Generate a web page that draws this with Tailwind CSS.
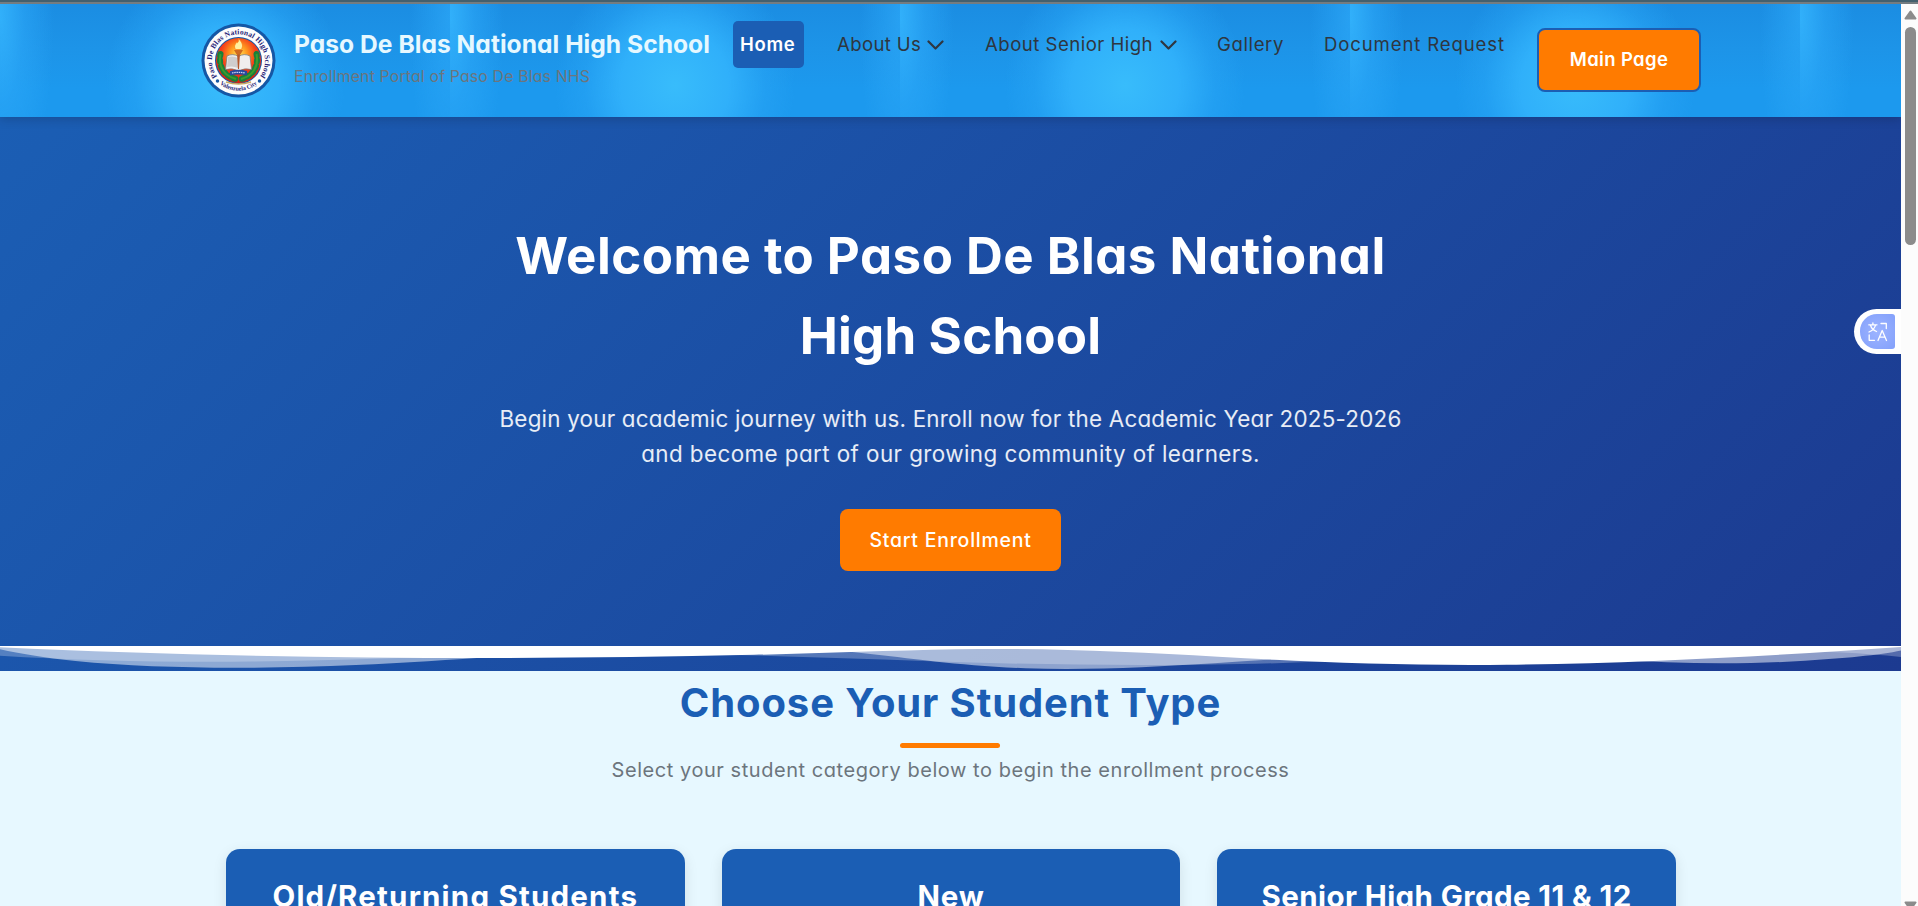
<!DOCTYPE html>
<html lang="en">
<head>
<meta charset="utf-8">
<title>Paso De Blas National High School</title>
<script src="https://cdn.jsdelivr.net/npm/@tailwindcss/browser@4"></script>
</head>
<body class="h-[906px] overflow-hidden bg-[#e7f8ff] font-['Inter','Open_Sans',sans-serif] [font-feature-settings:'cv11']">
<div class="flex h-[906px] flex-col overflow-hidden">
  <!-- browser edge -->
  <div class="h-1 shrink-0 border-b-2 border-[#747c80] bg-[#43606e]"></div>
  <div class="flex min-h-0 flex-1">
    <div class="relative flex w-[1901px] shrink-0 flex-col overflow-hidden">

      <header class="relative z-10 h-[113px] shrink-0 shadow-[0_2px_10px_rgba(0,0,0,0.18)] bg-[size:450px_113px] bg-[image:radial-gradient(ellipse_54px_200px_at_0%_10%,rgba(52,180,253,0.9)_0%,rgba(44,168,248,0.55)_45%,rgba(40,160,245,0)_100%),radial-gradient(ellipse_40px_200px_at_100%_10%,rgba(44,168,248,0.7)_0%,rgba(40,160,245,0)_100%),radial-gradient(ellipse_120px_125px_at_50%_72%,#38bcfb_0%,#30b0fa_45%,rgba(40,165,245,0.5)_75%,rgba(34,155,240,0)_100%),linear-gradient(180deg,#1b8de2_0%,#1d94e8_40%,#1c99ee_75%,#1c99ee_100%)]">
        <div class="flex items-start pl-[201px]">
          <svg class="mt-[19px] shrink-0" width="75" height="75" viewBox="0 0 150 150">
            <defs>
              <radialGradient id="sun" cx="50%" cy="35%" r="62%"><stop offset="0" stop-color="#ffe45a"/><stop offset=".3" stop-color="#ff9a1f"/><stop offset=".62" stop-color="#f5401a"/><stop offset="1" stop-color="#e0200f"/></radialGradient>
              <path id="arcTop" d="M 33 108 A 53 53 0 1 1 117 108"/>
              <path id="arcBot" d="M 30 115 A 60 60 0 0 0 120 115"/>
            </defs>
            <circle cx="75" cy="75" r="74" fill="#1557a5"/>
            <circle cx="75" cy="75" r="68" fill="#fdfdfd"/>
            <circle cx="75" cy="75" r="47" fill="#1557a5"/>
            <circle cx="75" cy="75" r="45" fill="url(#sun)"/>
            <g fill="none" stroke="#18803a" stroke-width="12" stroke-linecap="round" stroke-dasharray="4 8">
              <path d="M39 62C34 88 47 106 70 112"/><path d="M111 62C116 88 103 106 80 112"/>
            </g>
            <g fill="none" stroke="#3f9a2c" stroke-width="4">
              <path d="M39 62C34 88 47 106 70 112"/><path d="M111 62C116 88 103 106 80 112"/>
            </g>
            <path d="M52 66q12-6 23 1q11-7 23-1l3 27q-14-4-26 3q-12-7-26-3z" fill="#f0eeee" stroke="#777" stroke-width="1.500"/>
            <path d="M54 68q11-3 20 2v20q-10-5-22-2z" fill="#cfcdcd"/>
            <path d="M72 60h6l-2 32h-2z" fill="#b5562a"/>
            <path d="M66 54h18l-5 9h-8z" fill="#d06a20"/>
            <path d="M75 31c8 9 10 13 6 22h-12c-5-8 1-11 2-15c3 3 4 0 4-7z" fill="#fff0a0" stroke="#ff7b10" stroke-width="1.500"/>
            <path d="M58 96q17-5 34 0v9q-17-4-34 0z" fill="#28489c"/>
            <path d="M62 100q13-3 26 0" fill="none" stroke="#cdd6f5" stroke-width="2.500" stroke-dasharray="3 1.500"/>
            <path d="M50 118q25 8 50 0" fill="none" stroke="#c9a860" stroke-width="3"/>
            <circle cx="33" cy="116" r="3.500" fill="#1557a5"/><circle cx="117" cy="116" r="3.500" fill="#1557a5"/>
            <text font-family="Liberation Serif" font-weight="700" font-size="15" fill="#271d78"><textPath href="#arcTop" textLength="233" startOffset="1">Paso De Blas National High School</textPath></text>
            <text font-family="Liberation Serif" font-weight="700" font-size="12" fill="#271d78"><textPath href="#arcBot" startOffset="50%" text-anchor="middle">Valenzuela City</textPath></text>
          </svg>
          <div class="ml-[18px] mt-[22px] w-[439px] shrink-0 whitespace-nowrap">
            <div class="text-[24.6px] font-bold leading-[36px] tracking-[0.03px] text-[#e6f8ff]">Paso De Blas National High School</div>
            <div class="mt-[2px] text-[15.8px] leading-[26px] tracking-[0.18px] text-[#6c757d]">Enrollment Portal of Paso De Blas NHS</div>
          </div>
          <nav class="mt-[17px] flex shrink-0 items-center whitespace-nowrap text-[18.6px] leading-[47px] text-[#2f3640]">
            <div class="w-[71px] rounded-[5px] bg-[#1b5eb4] pl-[7px] text-[18.5px] font-semibold tracking-[0.7px] text-white">Home</div>
            <div class="ml-[33px] flex w-[107px] items-center justify-between tracking-[0.35px]"><span>About Us</span>
              <svg width="17" height="10" viewBox="0 0 17 10" fill="none" stroke="#2f3640" stroke-width="2.200" stroke-linecap="round" stroke-linejoin="round"><path d="M1.500 1.500L8.500 8.500L15.500 1.500"/></svg></div>
            <div class="ml-[41px] flex w-[192px] items-center justify-between tracking-[0.47px]"><span>About Senior High</span>
              <svg width="17" height="10" viewBox="0 0 17 10" fill="none" stroke="#2f3640" stroke-width="2.200" stroke-linecap="round" stroke-linejoin="round"><path d="M1.500 1.500L8.500 8.500L15.500 1.500"/></svg></div>
            <div class="ml-[40px] w-[67px] tracking-[0.6px]">Gallery</div>
            <div class="ml-[40px] w-[180px] tracking-[0.85px]">Document Request</div>
          </nav>
          <div class="ml-[33px] mt-[24px] h-[64px] w-[164px] shrink-0 rounded-[8px] border-2 border-[#1b5eb4] bg-[#ff7b00] text-center text-[18.5px] font-semibold leading-[59px] tracking-[0.35px] text-white">Main Page</div>
        </div>
      </header>

      <section class="flex h-[554px] shrink-0 flex-col items-center bg-[linear-gradient(135deg,#1b5eb4_0%,#1c3a90_100%)] text-white">
        <h1 class="mt-[99px] text-center text-[51px] font-bold leading-[80px]"><span class="tracking-[0.48px]">Welcome to Paso De Blas National</span><br><span class="tracking-[0.2px]">High School</span></h1>
        <p class="mt-[25px] text-center text-[22.4px] leading-[35.2px] text-white/90"><span class="tracking-[0.22px]">Begin your academic journey with us. Enroll now for the Academic Year 2025-2026</span><br><span class="tracking-[0.43px]">and become part of our growing community of learners.</span></p>
        <div class="mt-[38px] h-[62px] w-[221px] rounded-[8px] bg-[#ff7b00] text-center text-[19.5px] font-medium leading-[62px] tracking-[0.75px]">Start Enrollment</div>
        <svg class="mt-auto h-[25px] w-full shrink-0" viewBox="0 0 1200 120" preserveAspectRatio="none" fill="#fff">
          <path opacity=".25" d="M0,0V46.29c47.79,22.2,103.59,32.17,158,28,70.36-5.37,136.33-33.31,206.8-37.5C438.64,32.43,512.34,53.67,583,72.05c69.27,18,138.3,24.88,209.4,13.08,36.15-6,69.85-17.84,104.45-29.34C989.49,25,1113-14.29,1200,52.47V0Z"/>
          <path opacity=".5" d="M0,0V15.81C13,36.92,27.64,56.86,47.69,72.05,99.41,111.27,165,111,224.58,91.58c31.15-10.15,60.09-26.07,89.67-39.8,40.92-19,84.73-46,130.83-49.67,36.26-2.85,70.9,9.42,98.6,31.56,31.77,25.39,62.32,62,103.63,73,40.44,10.79,81.35-6.69,119.13-24.28s75.16-39,116.92-43.05c59.73-5.85,113.28,22.88,168.9,38.84,30.2,8.66,59,6.17,87.09-7.5,22.43-10.89,48-26.93,60.65-49.24V0Z"/>
          <path d="M0,0V5.63C149.93,59,314.09,71.32,475.83,42.57c43-7.64,84.23-20.12,127.61-26.46,59-8.63,112.48,12.24,165.56,35.4C827.93,77.22,886,95.24,951.2,90c86.53-7,172.46-45.71,248.8-84.81V0Z"/>
        </svg>
      </section>

      <main class="flex flex-1 flex-col items-center">
        <h2 class="mt-[2px] text-[40px] font-bold leading-[60px] tracking-[0.87px] text-[#1b5eb4]">Choose Your Student Type</h2>
        <div class="mr-px mt-[10px] h-[5px] w-[100px] shrink-0 rounded-[3px] bg-[#ff7b00]"></div>
        <p class="mt-[7px] text-[20px] leading-[30px] tracking-[0.55px] text-[#6c757d]">Select your student category below to begin the enrollment process</p>
        <div class="ml-px mt-[64px] grid w-[1450px] grid-cols-3 gap-[37px] whitespace-nowrap text-center text-[29.5px] font-bold leading-[44px] text-white">
          <div class="h-[120px] rounded-t-[14px] bg-[#1b5eb4] pt-[25px] tracking-[1.2px] shadow-[0_4px_14px_rgba(0,0,0,0.1)]">Old/Returning Students</div>
          <div class="h-[120px] rounded-t-[14px] bg-[#1b5eb4] pt-[25px] tracking-[0.8px] shadow-[0_4px_14px_rgba(0,0,0,0.1)]">New</div>
          <div class="h-[120px] rounded-t-[14px] bg-[#1b5eb4] pt-[25px] tracking-[0.4px] shadow-[0_4px_14px_rgba(0,0,0,0.1)]">Senior High Grade 11 &amp; 12</div>
        </div>
      </main>

      <!-- floating translate tab -->
      <div class="absolute right-0 top-[305px] z-20 flex h-[45px] w-[47px] items-center rounded-l-full bg-white pl-[6px]">
        <div class="flex h-[35px] w-[35px] items-center justify-center rounded-l-[17px] rounded-r-[3px] bg-[radial-gradient(circle,#9db4ff,#83a0fb)]">
          <svg width="20" height="20" viewBox="0 0 20 20" fill="none" stroke="#fff" stroke-width="1.300" stroke-linecap="round" stroke-linejoin="round"><path d="M.8 2.800H9M4.900 1V2.800M7.600 2.800C6.800 6 4.500 8.500 1 10M2.300 2.800C3.300 6 5.500 8.500 8.500 9.500M13 1.500H18.300V6.500M1.200 13V18.300H6.500M10 18.500L14.200 8.500L18.500 18.500M11.400 15.200H17.100"/></svg>
        </div>
      </div>
    </div>

    <!-- scrollbar -->
    <div class="flex w-[17px] shrink-0 flex-col items-center bg-[#fcfcfc]">
      <svg class="ml-[2px] mt-[6px] shrink-0" width="13" height="10" viewBox="0 0 13 10"><path d="M6.500 1.500L11.500 8.500H1.500Z" fill="#8b8b8b" stroke="#8b8b8b" stroke-width="2" stroke-linejoin="round"/></svg>
      <div class="ml-[2px] mt-[7px] h-[218px] w-[11px] rounded-full bg-[#8b8b8b]"></div>
      <svg class="mb-[-5px] ml-[2px] mt-auto shrink-0" width="13" height="10" viewBox="0 0 13 10"><path d="M6.500 8.500L11.500 1.500H1.500Z" fill="#8b8b8b" stroke="#8b8b8b" stroke-width="2" stroke-linejoin="round"/></svg>
    </div>
  </div>
</div>
</body>
</html>
